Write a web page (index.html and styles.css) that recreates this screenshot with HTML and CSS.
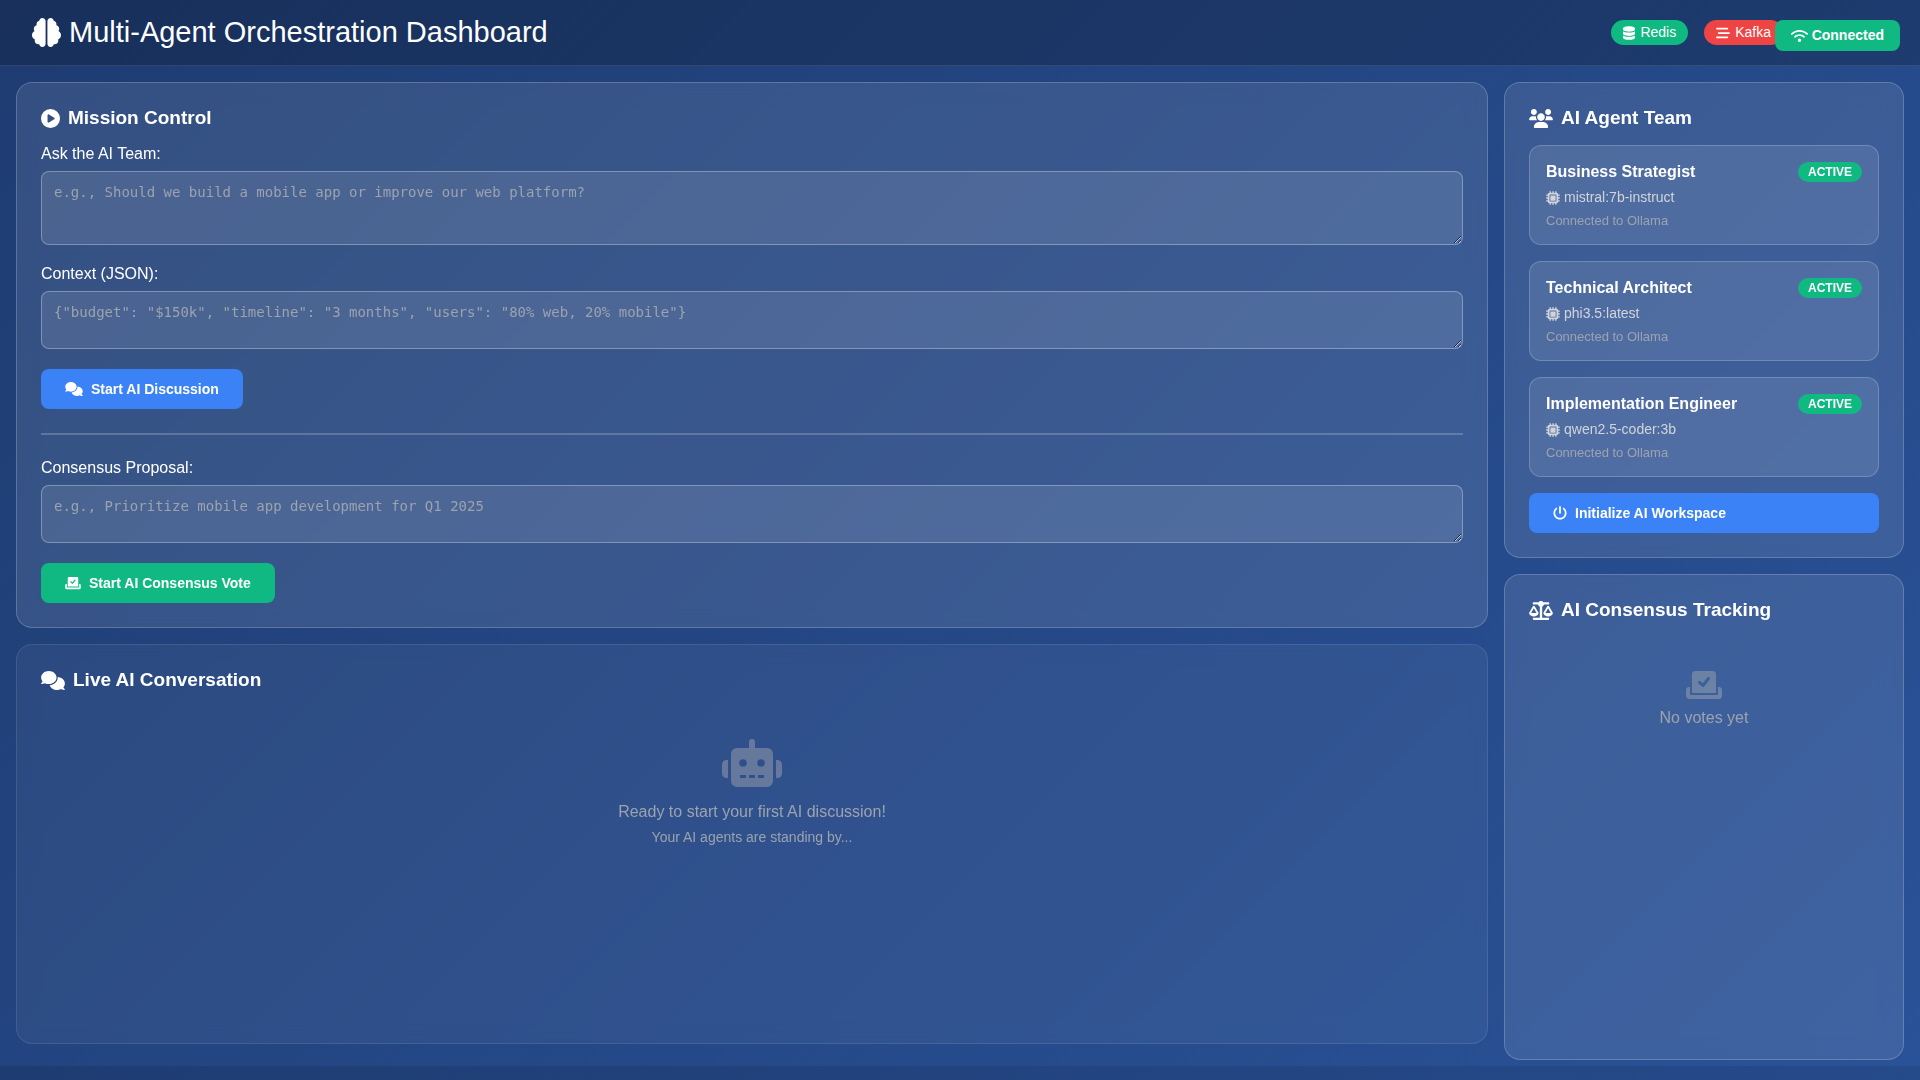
FILE: index.html
```html
<!DOCTYPE html>
<html lang="en">
<head>
<meta charset="utf-8">
<meta name="viewport" content="width=device-width, initial-scale=1">
<title>Multi-Agent Orchestration Dashboard</title>
<link rel="stylesheet" href="styles.css">
</head>
<body>
<svg class="sprite" aria-hidden="true">
  <symbol id="brain" viewBox="0 0 512 512"><path d="M184 0c30.9 0 56 25.1 56 56V456c0 30.9-25.1 56-56 56c-28.9 0-52.7-21.9-55.7-50.1c-5.2 1.4-10.7 2.1-16.3 2.1c-35.3 0-64-28.7-64-64c0-7.4 1.3-14.6 3.6-21.2C21.4 367.4 0 338.2 0 304c0-31.9 18.7-59.5 45.8-72.3C37.1 220.8 32 207 32 192c0-30.7 21.6-56.3 50.4-62.6C80.8 123.9 80 118 80 112c0-29.9 20.6-55.1 48.3-62.1C131.3 21.9 155.1 0 184 0zM328 0c28.9 0 52.6 21.9 55.7 49.9c27.8 7 48.3 32.1 48.3 62.1c0 6-.8 11.9-2.4 17.4c28.8 6.2 50.4 31.9 50.4 62.6c0 15-5.1 28.8-13.8 39.7C493.3 244.5 512 272.1 512 304c0 34.2-21.4 63.4-51.6 74.8c2.3 6.6 3.6 13.8 3.6 21.2c0 35.3-28.7 64-64 64c-5.6 0-11.1-.7-16.3-2.1c-3 28.2-26.8 50.1-55.7 50.1c-30.9 0-56-25.1-56-56V56c0-30.9 25.1-56 56-56z"/></symbol>
  <symbol id="database" viewBox="0 0 448 512"><path d="M448 80V128C448 172.2 347.7 208 224 208C100.3 208 0 172.2 0 128V80C0 35.82 100.3 0 224 0C347.7 0 448 35.82 448 80zM393.2 214.7C413.1 207.3 433.1 197.8 448 186.1V288C448 332.2 347.7 368 224 368C100.3 368 0 332.2 0 288V186.1C14.93 197.8 34.02 207.3 54.85 214.7C99.66 230.7 159.5 240 224 240C288.5 240 348.3 230.7 393.2 214.7zM54.85 374.7C99.66 390.7 159.5 400 224 400C288.5 400 348.3 390.7 393.2 374.7C413.1 367.3 433.1 357.8 448 346.1V432C448 476.2 347.7 512 224 512C100.3 512 0 476.2 0 432V346.1C14.93 357.8 34.02 367.3 54.85 374.7z"/></symbol>
  <symbol id="stream" viewBox="0 0 512 512"><path d="M0 96C0 78.3 14.3 64 32 64H416c17.7 0 32 14.3 32 32s-14.3 32-32 32H32C14.3 128 0 113.7 0 96zM64 256c0-17.7 14.3-32 32-32H480c17.7 0 32 14.3 32 32s-14.3 32-32 32H96c-17.7 0-32-14.3-32-32zM448 416c0 17.7-14.3 32-32 32H32c-17.7 0-32-14.3-32-32s14.3-32 32-32H416c17.7 0 32 14.3 32 32z"/></symbol>
  <symbol id="wifi" viewBox="0 0 640 512"><path d="M54.2 202.9C123.2 136.7 216.8 96 320 96s196.8 40.7 265.8 106.9c12.8 12.2 33 11.8 45.2-.9s11.8-33-.9-45.2C549.7 79.5 440.4 32 320 32S90.3 79.5 9.8 156.7C-2.9 169-3.3 189.2 8.9 202s32.5 13.2 45.2 .9zM320 256c56.8 0 108.6 21.1 148.2 56c13.3 11.7 33.5 10.4 45.2-2.8s10.4-33.5-2.8-45.2C459.8 219.2 393 192 320 192s-139.8 27.2-190.5 72c-13.3 11.7-14.5 31.9-2.8 45.2s31.9 14.5 45.2 2.8c39.5-34.9 91.3-56 148.2-56zm64 160a64 64 0 1 0 -128 0 64 64 0 1 0 128 0z"/></symbol>
  <symbol id="play" viewBox="0 0 512 512"><path d="M0 256a256 256 0 1 1 512 0A256 256 0 1 1 0 256zM188.3 147.1c-7.6 4.2-12.3 12.3-12.3 20.9V344c0 8.7 4.7 16.7 12.3 20.9s16.8 4.1 24.3-.5l144-88c7.1-4.4 11.5-12.1 11.5-20.5s-4.4-16.1-11.5-20.5l-144-88c-7.4-4.5-16.7-4.7-24.3-.5z"/></symbol>
  <symbol id="comments" viewBox="0 0 640 512"><path d="M208 352c114.9 0 208-78.8 208-176S322.9 0 208 0S0 78.8 0 176c0 38.6 14.7 74.3 39.6 103.4c-3.5 9.4-8.7 17.7-14.2 24.7c-4.8 6.2-9.7 11-13.3 14.3c-1.8 1.6-3.3 2.9-4.3 3.7c-.5 .4-.9 .7-1.1 .8l-.2 .2C1 327.2-1.4 334.4 .8 340.9S9.1 352 16 352c21.8 0 43.8-5.6 62.1-12.5c9.2-3.5 17.8-7.4 25.3-11.4C134.1 343.3 169.8 352 208 352zM448 176c0 112.3-99.1 196.9-216.5 207C255.8 457.4 336.4 512 432 512c38.2 0 73.9-8.7 104.7-23.9c7.5 4 16 7.9 25.2 11.4c18.3 6.9 40.3 12.5 62.1 12.5c6.9 0 13.1-4.5 15.2-11.1c2.1-6.6-.2-13.8-5.8-17.9l-.2-.2c-.2-.2-.6-.4-1.1-.8c-1-.8-2.5-2-4.3-3.7c-3.6-3.3-8.5-8.1-13.3-14.3c-5.5-7-10.7-15.4-14.2-24.7c24.9-29 39.6-64.7 39.6-103.4c0-92.8-84.9-168.9-192.6-175.5c.4 5.1 .6 10.3 .6 15.5z"/></symbol>
  <symbol id="vote" viewBox="0 0 576 512"><path d="M480 80C480 53.49 458.5 32 432 32h-288C117.5 32 96 53.49 96 80V384h384V80zM378.9 166.8l-88 112c-4.031 5.156-10 8.438-16.53 9.062C273.6 287.1 272.7 287.1 271.1 287.1c-5.719 0-11.21-2.019-15.58-5.769l-56-48C190.3 225.6 189.2 210.4 197.8 200.4c8.656-10.06 23.81-11.19 33.84-2.594l36.97 31.69l72.53-92.28c8.188-10.41 23.31-12.22 33.69-4.062C385.3 141.3 387.1 156.4 378.9 166.8zM528 288H512v112c0 8.836-7.164 16-16 16h-416C71.16 416 64 408.8 64 400V288H48C21.49 288 0 309.5 0 336v96C0 458.5 21.49 480 48 480h480c26.51 0 48-21.49 48-48v-96C576 309.5 554.5 288 528 288z"/></symbol>
  <symbol id="users" viewBox="0 0 640 512"><path d="M319.9 320c57.41 0 103.1-46.56 103.1-104c0-57.44-46.54-104-103.1-104c-57.41 0-103.1 46.56-103.1 104C215.9 273.4 262.5 320 319.9 320zM369.9 352H270.1C191.6 352 128 411.7 128 485.3C128 500.1 140.7 512 156.4 512h327.2C499.3 512 512 500.1 512 485.3C512 411.7 448.4 352 369.9 352zM512 160c44.18 0 80-35.82 80-80S556.2 0 512 0c-44.18 0-80 35.82-80 80S467.8 160 512 160zM183.9 216c0-5.449 .9824-10.63 1.609-15.91C174.6 194.1 162.6 192 149.9 192H88.08C39.44 192 0 233.8 0 285.3C0 295.6 7.887 304 17.62 304h199.5C196.7 280.2 183.9 249.7 183.9 216zM128 160c44.18 0 80-35.82 80-80S172.2 0 128 0C83.82 0 48 35.82 48 80S83.82 160 128 160zM551.9 192h-61.84c-12.8 0-24.88 3.037-35.86 8.24C454.8 205.5 455.8 210.6 455.8 216c0 33.71-12.78 64.21-33.16 88h199.7C632.1 304 640 295.6 640 285.3C640 233.8 600.6 192 551.9 192z"/></symbol>
  <symbol id="chip" viewBox="0 0 512 512"><path d="M176 24c0-13.3-10.7-24-24-24s-24 10.7-24 24V64c-35.3 0-64 28.7-64 64H24c-13.3 0-24 10.7-24 24s10.7 24 24 24H64v56H24c-13.3 0-24 10.7-24 24s10.7 24 24 24H64v56H24c-13.3 0-24 10.7-24 24s10.7 24 24 24H64c0 35.3 28.7 64 64 64v40c0 13.3 10.7 24 24 24s24-10.7 24-24V448h56v40c0 13.3 10.7 24 24 24s24-10.7 24-24V448h56v40c0 13.3 10.7 24 24 24s24-10.7 24-24V448c35.3 0 64-28.7 64-64h40c13.3 0 24-10.7 24-24s-10.7-24-24-24H448V280h40c13.3 0 24-10.7 24-24s-10.7-24-24-24H448V176h40c13.3 0 24-10.7 24-24s-10.7-24-24-24H448c0-35.3-28.7-64-64-64V24c0-13.3-10.7-24-24-24s-24 10.7-24 24V64H280V24c0-13.3-10.7-24-24-24s-24 10.7-24 24V64H176V24zM160 128H352c17.7 0 32 14.3 32 32V352c0 17.7-14.3 32-32 32H160c-17.7 0-32-14.3-32-32V160c0-17.7 14.3-32 32-32zm192 32H160V352H352V160z" fill-rule="evenodd"/></symbol>
  <symbol id="power" viewBox="0 0 512 512"><path d="M288 32c0-17.7-14.3-32-32-32s-32 14.3-32 32V256c0 17.7 14.3 32 32 32s32-14.3 32-32V32zM143.5 120.6c13.6-11.3 15.4-31.5 4.1-45.1s-31.5-15.4-45.1-4.1C49.7 115.4 16 181.8 16 256c0 132.5 107.5 240 240 240s240-107.5 240-240c0-74.2-33.8-140.6-86.6-184.6c-13.6-11.3-33.8-9.4-45.1 4.1s-9.4 33.8 4.1 45.1c38.9 32.3 63.5 81 63.5 135.4c0 97.2-78.8 176-176 176s-176-78.8-176-176c0-54.4 24.7-103.1 63.5-135.4z"/></symbol>
  <symbol id="scale" viewBox="0 0 640 512"><path d="M384 32H512c17.7 0 32 14.3 32 32s-14.3 32-32 32H398.4c-5.2 25.8-22.9 47.1-46.4 57.3V448H512c17.7 0 32 14.3 32 32s-14.3 32-32 32H320 128c-17.7 0-32-14.3-32-32s14.3-32 32-32H288V153.3c-23.5-10.3-41.2-31.6-46.4-57.3H128c-17.7 0-32-14.3-32-32s14.3-32 32-32H256c14.6-19.4 37.8-32 64-32s49.4 12.6 64 32zm55.6 288H584.4L512 195.8 439.6 320zM512 416c-62.9 0-115.2-34-126-78.9c-2.6-11 1-22.3 6.7-32.1l95.2-163.2c5-8.6 14.2-13.8 24.1-13.8s19.1 5.3 24.1 13.8l95.2 163.2c5.7 9.8 9.3 21.1 6.7 32.1C627.2 382 574.9 416 512 416zM126.8 195.8L54.4 320H199.3L126.8 195.8zM.9 337.1c-2.6-11 1-22.3 6.7-32.1l95.2-163.2c5-8.6 14.2-13.8 24.1-13.8s19.1 5.3 24.1 13.8l95.2 163.2c5.7 9.8 9.3 21.1 6.7 32.1C242 382 189.7 416 126.8 416S11.7 382 .9 337.1z"/></symbol>
  <symbol id="robot" viewBox="0 0 640 512"><path fill-rule="evenodd" d="M288 96V32a32 32 0 0 1 64 0V96H480a64 64 0 0 1 64 64V448a64 64 0 0 1-64 64H160a64 64 0 0 1-64-64V160a64 64 0 0 1 64-64zM264 256a40 40 0 1 0-80 0a40 40 0 1 0 80 0zM456 256a40 40 0 1 0-80 0a40 40 0 1 0 80 0zM192 384v32h64v-32zM288 384v32h64v-32zM384 384v32h64v-32zM64 224V416H48a48 48 0 0 1-48-48V272a48 48 0 0 1 48-48zM576 224h16a48 48 0 0 1 48 48v96a48 48 0 0 1-48 48H576z"/></symbol>
</svg>

<header class="header">
  <h1 class="brand"><svg class="icon brand-icon" aria-hidden="true"><use href="#brain"/></svg>Multi-Agent Orchestration Dashboard</h1>
  <div class="services">
    <span class="pill pill-up"><svg class="icon icon-narrow" aria-hidden="true"><use href="#database"/></svg>Redis</span>
    <span class="pill pill-down"><svg class="icon" aria-hidden="true"><use href="#stream"/></svg>Kafka</span>
  </div>
</header>
<div class="connection" role="status"><svg class="icon icon-signal" aria-hidden="true"><use href="#wifi"/></svg>Connected</div>

<main class="dashboard">
  <div class="column column-main">
    <section class="panel">
      <h2 class="panel-title"><svg class="icon title-icon-round" aria-hidden="true"><use href="#play"/></svg>Mission Control</h2>
      <form class="form">
        <label class="label" for="question">Ask the AI Team:</label>
        <textarea class="field field-tall" id="question" placeholder="e.g., Should we build a mobile app or improve our web platform?"></textarea>
        <label class="label" for="context">Context (JSON):</label>
        <textarea class="field" id="context" placeholder='{"budget": "$150k", "timeline": "3 months", "users": "80% web, 20% mobile"}'></textarea>
        <button class="button" type="button"><svg class="icon icon-wide" aria-hidden="true"><use href="#comments"/></svg>Start AI Discussion</button>
      </form>
      <hr class="divider">
      <form class="form">
        <label class="label" for="proposal">Consensus Proposal:</label>
        <textarea class="field" id="proposal" placeholder="e.g., Prioritize mobile app development for Q1 2025"></textarea>
        <button class="button button-success" type="button"><svg class="icon icon-slot" aria-hidden="true"><use href="#vote"/></svg>Start AI Consensus Vote</button>
      </form>
    </section>

    <section class="panel panel-conversation">
      <h2 class="panel-title"><svg class="icon title-icon" aria-hidden="true"><use href="#comments"/></svg>Live AI Conversation</h2>
      <div class="empty">
        <svg class="icon robot-icon" aria-hidden="true"><use href="#robot"/></svg>
        <p class="empty-text">Ready to start your first AI discussion!</p>
        <p class="empty-note">Your AI agents are standing by...</p>
      </div>
    </section>
  </div>

  <aside class="column">
    <section class="panel">
      <h2 class="panel-title"><svg class="icon title-icon" aria-hidden="true"><use href="#users"/></svg>AI Agent Team</h2>
      <div class="agents">
        <article class="agent">
          <div class="agent-head"><h3 class="agent-name">Business Strategist</h3><span class="badge">ACTIVE</span></div>
          <p class="agent-model"><svg class="icon" aria-hidden="true"><use href="#chip"/></svg>mistral:7b-instruct</p>
          <p class="agent-link">Connected to Ollama</p>
        </article>
        <article class="agent">
          <div class="agent-head"><h3 class="agent-name">Technical Architect</h3><span class="badge">ACTIVE</span></div>
          <p class="agent-model"><svg class="icon" aria-hidden="true"><use href="#chip"/></svg>phi3.5:latest</p>
          <p class="agent-link">Connected to Ollama</p>
        </article>
        <article class="agent">
          <div class="agent-head"><h3 class="agent-name">Implementation Engineer</h3><span class="badge">ACTIVE</span></div>
          <p class="agent-model"><svg class="icon" aria-hidden="true"><use href="#chip"/></svg>qwen2.5-coder:3b</p>
          <p class="agent-link">Connected to Ollama</p>
        </article>
        <button class="button" type="button"><svg class="icon" aria-hidden="true"><use href="#power"/></svg>Initialize AI Workspace</button>
      </div>
    </section>

    <section class="panel panel-votes">
      <h2 class="panel-title"><svg class="icon title-icon" aria-hidden="true"><use href="#scale"/></svg>AI Consensus Tracking</h2>
      <div class="empty">
        <svg class="icon ballot-icon" aria-hidden="true"><use href="#vote"/></svg>
        <p class="empty-text">No votes yet</p>
      </div>
    </section>
  </aside>
</main>
</body>
</html>
```

FILE: styles.css
```css
:root {
  --muted: #9ca3af;
  --green: #10b981;
  --blue: #3b82f6;
  --red: #ef4444;
}

*,
*::before,
*::after {
  box-sizing: border-box;
}

body {
  margin: 0;
  background: linear-gradient(135deg, #1e3c72 0%, #2a5298 100%);
  color: #fff;
  font-family: "Liberation Sans", Arial, sans-serif;
  font-size: 16px;
  line-height: 18px;
}

h1,
h2,
h3,
p {
  margin: 0;
}

.sprite {
  display: none;
}

.icon {
  flex: none;
  width: 14px;
  height: 14px;
  fill: currentColor;
}

.icon-narrow {
  width: 12px;
}

.icon-slot {
  width: 16px;
}

.icon-signal {
  width: 17px;
}

.icon-wide {
  width: 18px;
}

/* Header */
.header {
  display: flex;
  align-items: center;
  justify-content: space-between;
  padding: 16px 137px 16px 32px;
  background: rgba(0, 0, 0, 0.2);
  border-bottom: 1px solid rgba(255, 255, 255, 0.1);
}

.brand {
  display: flex;
  align-items: center;
  gap: 8px;
  font-size: 29px;
  font-weight: 400;
  line-height: 33px;
}

.brand-icon {
  width: 29px;
  height: 29px;
}

.services {
  display: flex;
  gap: 16px;
}

.pill {
  display: flex;
  align-items: center;
  gap: 5px;
  padding: 4px 12px;
  border-radius: 20px;
  font-size: 14px;
  line-height: 17px;
}

.pill-up {
  background: var(--green);
}

.pill-down {
  background: var(--red);
}

.connection {
  position: fixed;
  top: 20px;
  right: 20px;
  z-index: 10;
  display: flex;
  align-items: center;
  gap: 4px;
  padding: 8px 16px;
  border-radius: 8px;
  background: var(--green);
  font-size: 14px;
  font-weight: 700;
  line-height: 15px;
}

/* Layout */
.dashboard {
  display: grid;
  grid-template-columns: minmax(0, 1fr) 400px;
  gap: 16px;
  min-height: calc(100vh - 80px);
  padding: 16px 16px 6px;
}

.column {
  display: flex;
  flex-direction: column;
  gap: 16px;
}

.column-main {
  padding-bottom: 16px;
}

.panel {
  padding: 24px;
  border: 1px solid rgba(255, 255, 255, 0.2);
  border-radius: 16px;
  background: rgba(255, 255, 255, 0.1);
  backdrop-filter: blur(10px);
}

.panel-conversation {
  flex: 1;
  border-color: rgba(255, 255, 255, 0.1);
  background: rgba(255, 255, 255, 0.05);
}

.panel-votes {
  flex: 1;
}

.panel-title {
  display: flex;
  align-items: center;
  gap: 8px;
  margin-bottom: 16px;
  font-size: 19px;
  line-height: 22px;
}

.title-icon {
  width: 24px;
  height: 19px;
}

.title-icon-round {
  width: 19px;
  height: 19px;
}

/* Forms */
.form {
  display: flex;
  flex-direction: column;
  align-items: flex-start;
}

.label {
  margin-bottom: 8px;
}

.field {
  width: 100%;
  height: 58px;
  margin: 0 0 20px;
  padding: 12px;
  border: 1px solid rgba(255, 255, 255, 0.3);
  border-radius: 8px;
  background: rgba(255, 255, 255, 0.1);
  color: #fff;
  font-family: "DejaVu Sans Mono", monospace;
  font-size: 14px;
  line-height: 17px;
  resize: vertical;
}

.field-tall {
  height: 74px;
}

.field::placeholder {
  color: var(--muted);
}

.button {
  display: flex;
  align-items: center;
  gap: 8px;
  padding: 12px 24px;
  border: 0;
  border-radius: 8px;
  background: var(--blue);
  color: #fff;
  font-family: inherit;
  font-size: 14px;
  font-weight: 700;
  line-height: 16px;
  cursor: pointer;
}

.button-success {
  background: var(--green);
}

.divider {
  height: 2px;
  margin: 24px 0;
  border: 0;
  background: rgba(255, 255, 255, 0.2);
}

/* Agents */
.agents {
  display: flex;
  flex-direction: column;
  gap: 16px;
}

.agent {
  display: flex;
  flex-direction: column;
  gap: 8px;
  padding: 16px;
  border: 1px solid rgba(255, 255, 255, 0.2);
  border-radius: 12px;
  background: rgba(255, 255, 255, 0.1);
}

.agent-head {
  display: flex;
  align-items: center;
  justify-content: space-between;
}

.agent-name {
  font-size: 16px;
}

.badge {
  padding: 3px 10px;
  border-radius: 12px;
  background: var(--green);
  font-size: 12px;
  font-weight: 700;
  line-height: 14px;
}

.agent-model {
  display: flex;
  align-items: center;
  gap: 4px;
  color: #d1d5db;
  font-size: 14px;
  line-height: 15px;
}

.agent-link {
  color: var(--muted);
  font-size: 13px;
  line-height: 15px;
}

/* Empty states */
.empty {
  display: flex;
  flex-direction: column;
  align-items: center;
  padding: 32px;
  color: var(--muted);
  text-align: center;
}

.robot-icon {
  width: 60px;
  height: 48px;
  margin-bottom: 16px;
  opacity: 0.5;
}

.ballot-icon {
  width: 36px;
  height: 32px;
  margin-bottom: 8px;
  opacity: 0.5;
}

.empty-note {
  margin-top: 8px;
  font-size: 14px;
  line-height: 16px;
}
```
